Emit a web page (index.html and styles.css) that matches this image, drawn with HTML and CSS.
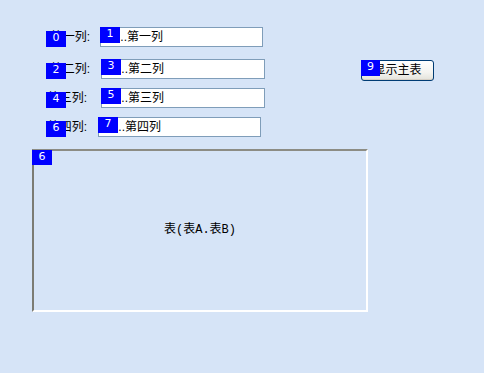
FILE: index.html
```html
<!DOCTYPE html>
<html lang="zh">
<head>
<meta charset="utf-8">
<title>表单</title>
<link rel="stylesheet" href="styles.css">
</head>
<body>
<div class="canvas">
  <div class="fields">
    <div class="label"><span class="badge badge-label">0</span>第一列:</div>
    <div class="input"><span class="badge badge-input">1</span>...第一列</div>

    <div class="label"><span class="badge badge-label">2</span>第二列:</div>
    <div class="input input-r"><span class="badge badge-input">3</span>...第二列</div>
    <button class="btn" type="button"><span class="badge badge-btn">9</span>显示主表</button>

    <div class="label label-low"><span class="badge badge-label">4</span>第三列:</div>
    <div class="input input-r"><span class="badge badge-input">5</span>...第三列</div>

    <div class="label label-low"><span class="badge badge-label">6</span>第四列:</div>
    <div class="input input-l"><span class="badge badge-input">7</span>...第四列</div>
  </div>
  <div class="table-frame"><span class="badge badge-frame">6</span><span class="table-text">表(表A.表B)</span></div>
</div>
</body>
</html>
```

FILE: styles.css
```css
html, body {
  margin: 0;
  padding: 0;
}

body {
  background: #d6e4f7;
  width: 484px;
  height: 373px;
  overflow: hidden;
  font-family: "Liberation Sans", "Noto Sans CJK SC", sans-serif;
  font-size: 12px;
  color: #000;
}

.fields {
  display: grid;
  grid-template-columns: 54px 163px auto;
  grid-template-rows: 32px 29px 29px 20px;
  padding: 27px 0 0 46px;
  align-items: start;
  justify-items: start;
}

.label {
  grid-column: 1;
  position: relative;
  box-sizing: border-box;
  width: 54px;
  height: 20px;
  line-height: 20px;
  text-align: right;
  padding-right: 10px;
  white-space: nowrap;
}

.label-low {
  padding-right: 13px;
}

.input {
  grid-column: 2;
  position: relative;
  box-sizing: border-box;
  width: 163px;
  height: 20px;
  line-height: 18px;
  border: 1px solid #7f9db9;
  background: #fff;
  padding-left: 16px;
  white-space: nowrap;
}

.input-r {
  margin-left: 1px;
  width: 164px;
}

.input-l {
  margin-left: -2px;
}

.btn {
  position: relative;
  grid-column: 3;
  grid-row: 2;
  margin: 1px 0 0 98px;
  width: 73px;
  height: 21px;
  padding: 0;
  border: 1px solid #003c74;
  border-radius: 3px;
  background: linear-gradient(#ffffff 0%, #f4f4f0 60%, #e3e2da 100%);
  box-shadow: inset 0 -1px 0 #d6d0c5;
  font: inherit;
  color: #000;
  line-height: 19px;
}

.table-frame {
  position: relative;
  box-sizing: border-box;
  margin: 12px 0 0 32px;
  width: 336px;
  height: 163px;
  border: 2px solid #fff;
  border-top-color: #8c8c84;
  border-left-color: #7c7c74;
  display: flex;
  align-items: center;
  justify-content: center;
}

.table-text {
  font-family: "Liberation Mono", "Noto Sans CJK SC", monospace;
  font-size: 12px;
  margin-top: -6px;
}

.badge {
  position: absolute;
  width: 20px;
  height: 16px;
  background: #0000ff;
  color: #fff;
  font-family: "DejaVu Sans", sans-serif;
  font-size: 11px;
  line-height: 14px;
  text-align: center;
}

.badge-label {
  left: 0;
  bottom: 0;
}

.badge-input {
  left: -1px;
  top: -1px;
}

.badge-btn {
  left: -1px;
  top: -1px;
  width: 19px;
}

.badge-frame {
  left: -2px;
  top: -1px;
  height: 15px;
}
```
